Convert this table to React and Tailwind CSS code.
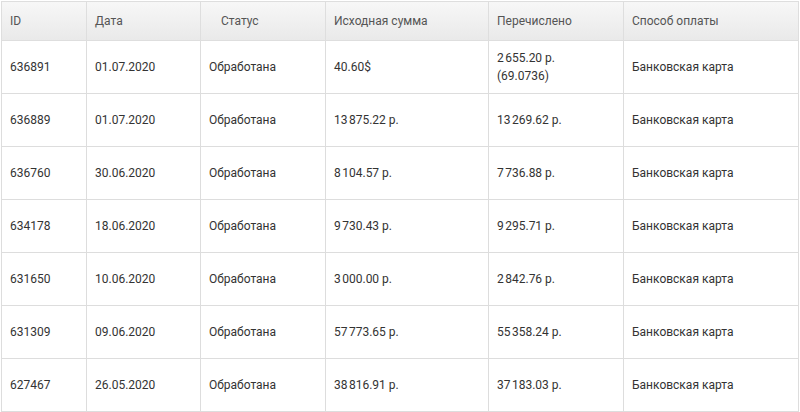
import React from "react";

const nb = "\u202F";

const rows = [
  { id: "636891", date: "01.07.2020", status: "Обработана", amount: "40.60$", paid: [`2${nb}655.20 р.`, "(69.0736)"] },
  { id: "636889", date: "01.07.2020", status: "Обработана", amount: `13${nb}875.22 р.`, paid: [`13${nb}269.62 р.`] },
  { id: "636760", date: "30.06.2020", status: "Обработана", amount: `8${nb}104.57 р.`, paid: [`7${nb}736.88 р.`] },
  { id: "634178", date: "18.06.2020", status: "Обработана", amount: `9${nb}730.43 р.`, paid: [`9${nb}295.71 р.`] },
  { id: "631650", date: "10.06.2020", status: "Обработана", amount: `3${nb}000.00 р.`, paid: [`2${nb}842.76 р.`] },
  { id: "631309", date: "09.06.2020", status: "Обработана", amount: `57${nb}773.65 р.`, paid: [`55${nb}358.24 р.`] },
  { id: "627467", date: "26.05.2020", status: "Обработана", amount: `38${nb}816.91 р.`, paid: [`37${nb}183.03 р.`] },
];

const App = () => {
  return (
    <div className="w-[800px] h-[412px] bg-white pl-[1px] pt-[1px] overflow-hidden font-['Roboto',sans-serif] text-[12px]">
      <table className="w-[797px] table-fixed border-collapse">
        <colgroup>
          <col className="w-[85px]" />
          <col className="w-[114px]" />
          <col className="w-[125px]" />
          <col className="w-[163px]" />
          <col className="w-[135px]" />
          <col className="w-[175px]" />
        </colgroup>
        <thead>
          {/* Header row */}
          <tr className="bg-gradient-to-b from-[#f7f7f7] to-[#e9e9e9] text-[#555]">
            <th className="h-[39px] border border-[#dedede] px-[8px] text-left font-normal">ID</th>
            <th className="border border-[#dedede] px-[8px] text-left font-normal">Дата</th>
            <th className="border border-[#dedede] pl-[20px] text-left font-normal">Статус</th>
            <th className="border border-[#dedede] px-[8px] text-left font-normal">Исходная сумма</th>
            <th className="border border-[#dedede] px-[8px] text-left font-normal">Перечислено</th>
            <th className="border border-[#dedede] px-[8px] text-left font-normal">Способ оплаты</th>
          </tr>
        </thead>
        <tbody className="text-[#333]">
          {rows.map((row) => (
            <tr key={row.id}>
              <td className="h-[53px] border border-[#ddd] px-[8px]">{row.id}</td>
              <td className="border border-[#ddd] px-[8px]">{row.date}</td>
              <td className="border border-[#ddd] px-[8px]">{row.status}</td>
              <td className="border border-[#ddd] px-[8px]">{row.amount}</td>
              <td className="border border-[#ddd] px-[8px] leading-[18px]">
                {row.paid.map((line) => (
                  <div key={line}>{line}</div>
                ))}
              </td>
              <td className="border border-[#ddd] px-[8px]">Банковская карта</td>
            </tr>
          ))}
        </tbody>
      </table>
    </div>
  );
};

export default App;
